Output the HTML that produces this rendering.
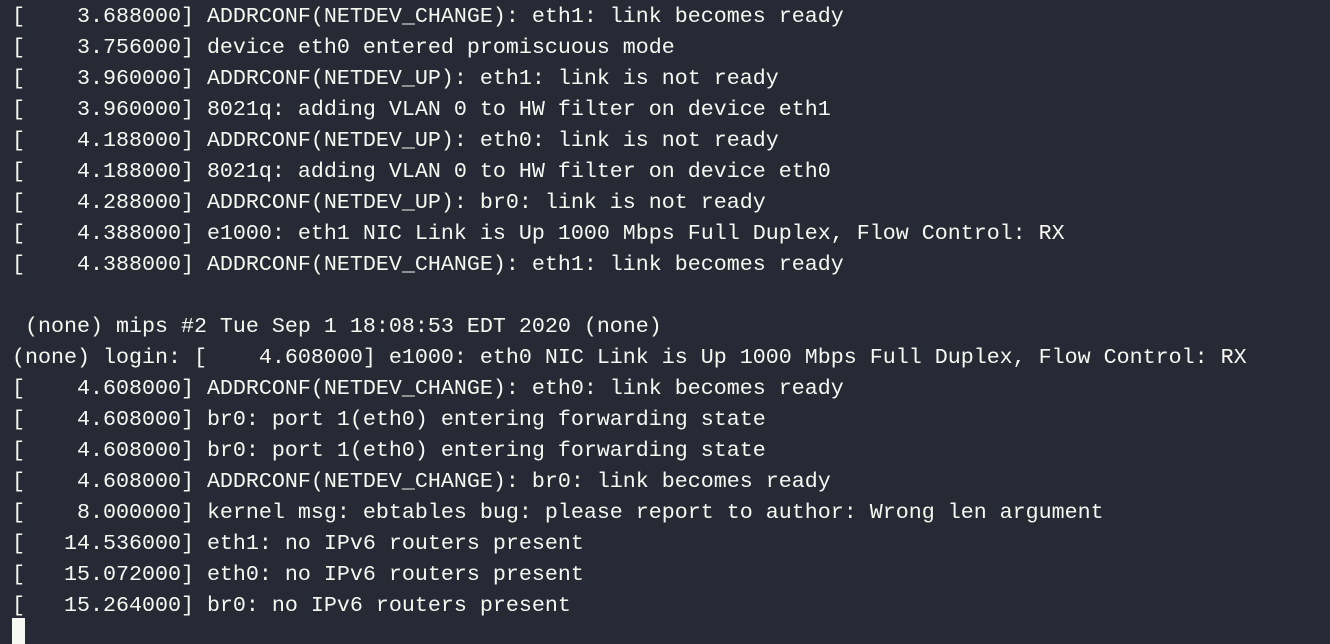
<html><head><style>
body{margin:0;background:#272935;width:1330px;height:644px;overflow:hidden}
pre{margin:0;position:absolute;left:12px;top:1px;font-family:"Liberation Mono",monospace;font-size:21.67px;line-height:31px;color:#f8f8f2}
.c{position:absolute;left:12px;top:618px;width:13px;height:26px;background:#f8f8f2}
</style></head><body><pre>[    3.688000] ADDRCONF(NETDEV_CHANGE): eth1: link becomes ready
[    3.756000] device eth0 entered promiscuous mode
[    3.960000] ADDRCONF(NETDEV_UP): eth1: link is not ready
[    3.960000] 8021q: adding VLAN 0 to HW filter on device eth1
[    4.188000] ADDRCONF(NETDEV_UP): eth0: link is not ready
[    4.188000] 8021q: adding VLAN 0 to HW filter on device eth0
[    4.288000] ADDRCONF(NETDEV_UP): br0: link is not ready
[    4.388000] e1000: eth1 NIC Link is Up 1000 Mbps Full Duplex, Flow Control: RX
[    4.388000] ADDRCONF(NETDEV_CHANGE): eth1: link becomes ready

 (none) mips #2 Tue Sep 1 18:08:53 EDT 2020 (none)
(none) login: [    4.608000] e1000: eth0 NIC Link is Up 1000 Mbps Full Duplex, Flow Control: RX
[    4.608000] ADDRCONF(NETDEV_CHANGE): eth0: link becomes ready
[    4.608000] br0: port 1(eth0) entering forwarding state
[    4.608000] br0: port 1(eth0) entering forwarding state
[    4.608000] ADDRCONF(NETDEV_CHANGE): br0: link becomes ready
[    8.000000] kernel msg: ebtables bug: please report to author: Wrong len argument
[   14.536000] eth1: no IPv6 routers present
[   15.072000] eth0: no IPv6 routers present
[   15.264000] br0: no IPv6 routers present</pre><div class="c"></div></body></html>
